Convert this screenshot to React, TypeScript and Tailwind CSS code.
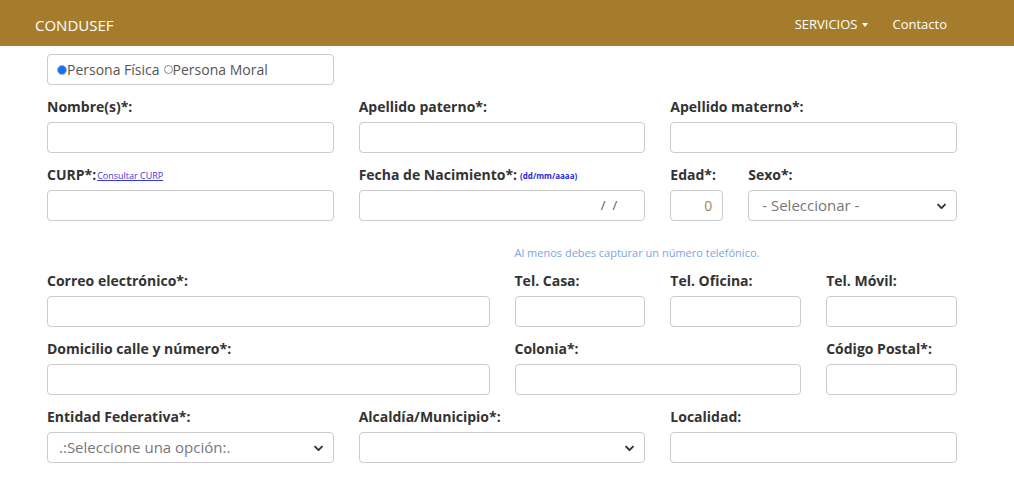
import { ReactNode } from "react";

const font = { fontFamily: '"Open Sans", "Liberation Sans", sans-serif' };

function Chevron() {
  return (
    <svg
      viewBox="0 0 16 16"
      className="pointer-events-none absolute right-[9px] top-1/2 h-[11px] w-[11px] -translate-y-1/2"
    >
      <path d="M3 6 L8 11 L13 6" fill="none" stroke="#333" strokeWidth="2.8" strokeLinecap="round" strokeLinejoin="round" />
    </svg>
  );
}

function Field({
  label,
  extra,
  span,
  children,
}: {
  label: string;
  extra?: ReactNode;
  span: string;
  children?: ReactNode;
}) {
  return (
    <div className={`${span} flex flex-col`}>
      <div className="mb-[6px] flex h-[20px] items-center whitespace-nowrap">
        <span className="text-[14px] font-bold text-[#333]">{label}</span>
        {extra}
      </div>
      {children ?? <input type="text" className="h-[31px] w-full rounded-[4px] border border-[#ccc] bg-white px-3 text-[14px] outline-none" />}
    </div>
  );
}

function Select({ placeholder, pad }: { placeholder: string; pad: string }) {
  return (
    <div className="relative h-[31px] w-full rounded-[4px] border border-[#ccc] bg-white">
      <div className={`${pad} flex h-full items-center text-[15px] text-[#777]`}>{placeholder}</div>
      <Chevron />
    </div>
  );
}

export default function App() {
  return (
    <div className="min-h-screen bg-white" style={font}>
      <header className="h-[46px] bg-[#a57c2c]">
        <div className="ml-[35px] flex h-full w-[934px] items-center justify-between pt-[4px]">
          <span className="text-[15px] text-white">CONDUSEF</span>
          <nav className="flex items-center gap-[24px] pr-[22px] text-[13px] text-white">
            <span className="flex items-center gap-[5px] pl-[2px]">
              SERVICIOS
              <span className="inline-block h-0 w-0 border-x-[3.5px] border-t-[4px] border-x-transparent border-t-white" />
            </span>
            <span>Contacto</span>
          </nav>
        </div>
      </header>

      <main className="ml-[35px] w-[934px] px-[12px] pt-[8px]">
        <div className="grid grid-cols-12 gap-x-[25px]">
          <div className="col-span-4 flex h-[31px] items-center rounded-[4px] border border-[#ccc] px-[9px] text-[14px] text-[#555]">
            <span className="inline-block h-[10px] w-[10px] rounded-full border-[1.5px] border-[#8ab4f0] bg-[#1a6fe8]" />
            <span>Persona Física</span>
            <span className="ml-[4px] inline-block h-[9px] w-[9px] rounded-full border border-[#888]" />
            <span>Persona Moral</span>
          </div>
        </div>

        <div className="mt-[11px] grid grid-cols-12 gap-x-[25px] gap-y-[11px]">
          <Field span="col-span-4" label="Nombre(s)*:" />
          <Field span="col-span-4" label="Apellido paterno*:" />
          <Field span="col-span-4" label="Apellido materno*:" />

          <Field
            span="col-span-4"
            label="CURP*:"
            extra={<a className="ml-[1px] mt-[3px] text-[9px] text-[#3a3ad0] underline">Consultar CURP</a>}
          />
          <Field
            span="col-span-4"
            label="Fecha de Nacimiento*:"
            extra={<span className="ml-[3px] mt-[3px] text-[8px] font-bold text-[#2a2ad8]">(dd/mm/aaaa)</span>}
          >
            <div className="flex h-[31px] w-full items-center justify-end rounded-[4px] border border-[#ccc] bg-white pr-[27px] text-[13px] text-[#555]">
              <span>/</span>
              <span className="ml-[7px]">/</span>
            </div>
          </Field>
          <Field span="col-span-1" label="Edad*:">
            <div className="flex h-[31px] w-full items-center justify-end rounded-[4px] border border-[#ccc] bg-white pr-[10px] text-[14px] text-[#a08466]">
              0
            </div>
          </Field>
          <Field span="col-span-3" label="Sexo*:">
            <Select placeholder="- Seleccionar -" pad="px-[13px]" />
          </Field>
        </div>

        <div className="mt-[24px] grid grid-cols-12 gap-x-[25px]">
          <div className="col-span-6 col-start-7 h-[16px] text-[11px] leading-[16px] text-[#7aa5e6]">
            Al menos debes capturar un número telefónico.
          </div>
        </div>

        <div className="mt-[9px] grid grid-cols-12 gap-x-[25px] gap-y-[11px]">
          <Field span="col-span-6" label="Correo electrónico*:" />
          <Field span="col-span-2" label="Tel. Casa:" />
          <Field span="col-span-2" label="Tel. Oficina:" />
          <Field span="col-span-2" label="Tel. Móvil:" />

          <Field span="col-span-6" label="Domicilio calle y número*:" />
          <Field span="col-span-4" label="Colonia*:" />
          <Field span="col-span-2" label="Código Postal*:" />

          <Field span="col-span-4" label="Entidad Federativa*:">
            <Select placeholder=".:Seleccione una opción:." pad="px-[11px]" />
          </Field>
          <Field span="col-span-4" label="Alcaldía/Municipio*:">
            <Select placeholder="" pad="px-[11px]" />
          </Field>
          <Field span="col-span-4" label="Localidad:" />
        </div>
      </main>
    </div>
  );
}
